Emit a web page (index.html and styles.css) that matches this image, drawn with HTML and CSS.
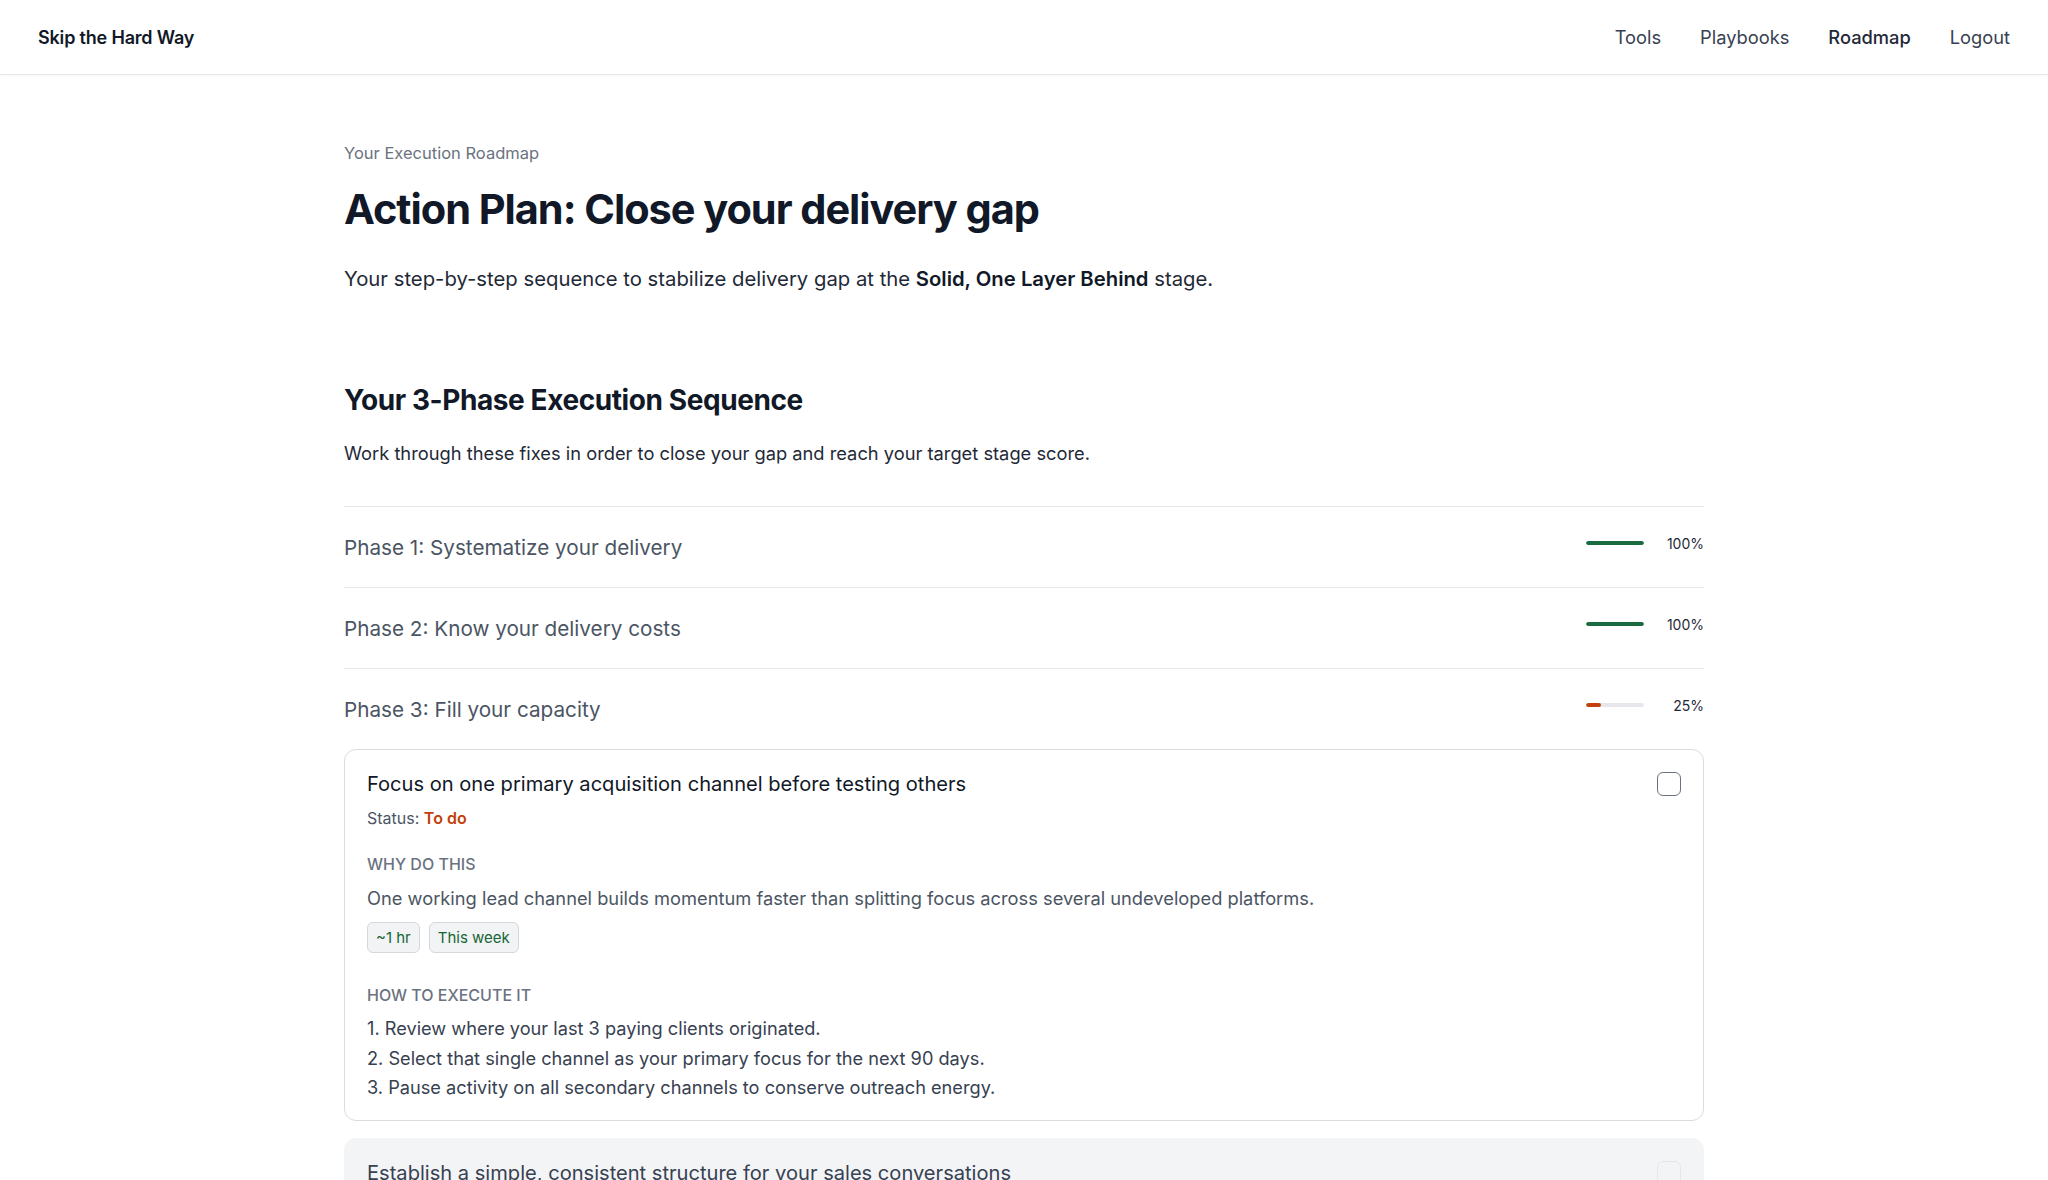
FILE: index.html
```html
<!DOCTYPE html>
<html lang="en">
<head>
<meta charset="utf-8">
<title>Action Plan – Skip the Hard Way</title>
<link rel="stylesheet" href="styles.css">
</head>
<body>
<header class="topbar">
  <a class="brand" href="#">Skip the Hard Way</a>
  <nav class="nav">
    <a href="#">Tools</a>
    <a href="#">Playbooks</a>
    <a href="#" class="active">Roadmap</a>
    <a href="#">Logout</a>
  </nav>
</header>

<main class="page">
  <p class="eyebrow">Your Execution Roadmap</p>
  <h1 class="title">Action Plan: Close your delivery gap</h1>
  <p class="lead">Your step-by-step sequence to stabilize delivery gap at the <strong>Solid, One Layer Behind</strong> stage.</p>

  <section class="sequence">
    <h2 class="section-title">Your 3-Phase Execution Sequence</h2>
    <p class="section-intro">Work through these fixes in order to close your gap and reach your target stage score.</p>

    <div class="phases">
      <div class="phase">
        <div class="phase-head">
          <span class="phase-name">Phase 1: Systematize your delivery</span>
          <div class="progress">
            <div class="track"><div class="fill done" style="width:100%"></div></div>
            <span class="pct">100%</span>
          </div>
        </div>
      </div>

      <div class="phase">
        <div class="phase-head">
          <span class="phase-name">Phase 2: Know your delivery costs</span>
          <div class="progress">
            <div class="track"><div class="fill done" style="width:100%"></div></div>
            <span class="pct">100%</span>
          </div>
        </div>
      </div>

      <div class="phase open">
        <div class="phase-head">
          <span class="phase-name">Phase 3: Fill your capacity</span>
          <div class="progress">
            <div class="track"><div class="fill todo" style="width:25%"></div></div>
            <span class="pct">25%</span>
          </div>
        </div>

        <div class="tasks">
          <article class="task">
            <div class="task-top">
              <div>
                <h3 class="task-title">Focus on one primary acquisition channel before testing others</h3>
                <p class="status">Status: <span class="status-todo">To do</span></p>
              </div>
              <span class="check"></span>
            </div>

            <h4 class="label">Why do this</h4>
            <p class="why">One working lead channel builds momentum faster than splitting focus across several undeveloped platforms.</p>
            <div class="tags">
              <span class="tag">~1 hr</span>
              <span class="tag">This week</span>
            </div>

            <h4 class="label how">How to execute it</h4>
            <ol class="steps">
              <li>1. Review where your last 3 paying clients originated.</li>
              <li>2. Select that single channel as your primary focus for the next 90 days.</li>
              <li>3. Pause activity on all secondary channels to conserve outreach energy.</li>
            </ol>
          </article>

          <article class="task locked">
            <div class="task-top">
              <div>
                <h3 class="task-title">Establish a simple, consistent structure for your sales conversations</h3>
              </div>
              <span class="check"></span>
            </div>
          </article>
        </div>
      </div>
    </div>
  </section>
</main>
</body>
</html>
```

FILE: styles.css
```css
* {
  box-sizing: border-box;
}

html, body {
  margin: 0;
  padding: 0;
  background: #ffffff;
}

body {
  font-family: Inter, "Noto Sans", "Liberation Sans", sans-serif;
  color: #111827;
  -webkit-font-smoothing: antialiased;
}

a {
  text-decoration: none;
  color: inherit;
}

/* top bar */
.topbar {
  height: 75px;
  display: flex;
  align-items: center;
  justify-content: space-between;
  padding: 0 38px;
  border-bottom: 1px solid #e5e7eb;
  box-shadow: 0 1px 3px rgba(0, 0, 0, 0.04);
}

.brand {
  font-size: 18px;
  font-weight: 600;
  color: #111827;
  letter-spacing: -0.01em;
}

.nav {
  display: flex;
  gap: 39px;
}

.nav a {
  font-size: 18.3px;
  color: #374151;
}

.nav a.active {
  color: #1f2937;
  font-weight: 500;
}

/* page */
.page {
  max-width: 1360px;
  margin: 0 auto;
  padding-top: 66px;
}

.eyebrow {
  margin: 0;
  font-size: 16.5px;
  line-height: 24px;
  color: #6b7280;
}

.title {
  margin: 20px 0 0;
  font-size: 41.5px;
  line-height: 48px;
  font-weight: 700;
  letter-spacing: -0.025em;
  color: #111827;
}

.lead {
  margin: 31px 0 0;
  font-size: 20.3px;
  line-height: 30px;
  color: #1f2937;
}

.lead strong {
  font-weight: 600;
  color: #111827;
}

.sequence {
  margin-top: 88px;
}

.section-title {
  margin: 0;
  font-size: 28px;
  line-height: 36px;
  font-weight: 700;
  letter-spacing: -0.015em;
  color: #111827;
}

.section-intro {
  margin: 21px 0 0;
  font-size: 18.3px;
  line-height: 28px;
  color: #1f2937;
}

/* phases */
.phases {
  margin-top: 39px;
}

.phase {
  border-top: 1px solid #e5e7eb;
}

.phase-head {
  height: 80px;
  display: flex;
  align-items: center;
  justify-content: space-between;
}

.phase-name {
  font-size: 20.7px;
  color: #4b5563;
}

.progress {
  display: flex;
  align-items: center;
  gap: 20px;
  margin-top: -8px;
}

.track {
  width: 58px;
  height: 4px;
  border-radius: 2px;
  background: #e5e7eb;
  overflow: hidden;
}

.fill {
  height: 100%;
  border-radius: 2px;
}

.fill.done {
  background: #1a6b40;
}

.fill.todo {
  background: #c2410c;
}

.pct {
  width: 40px;
  text-align: right;
  font-size: 14px;
  color: #1f2937;
}

/* tasks */
.tasks {
  display: flex;
  flex-direction: column;
  gap: 17px;
}

.task {
  border: 1px solid #d9dce1;
  border-radius: 12px;
  padding: 20px 22px 17px 22px;
  background: #ffffff;
}

.task-top {
  display: flex;
  justify-content: space-between;
  align-items: flex-start;
}

.task-title {
  margin: 0;
  font-size: 20.1px;
  line-height: 28px;
  font-weight: 400;
  color: #111827;
}

.check {
  flex: none;
  width: 24px;
  height: 24px;
  margin-top: 2px;
  border: 1.5px solid #6b7280;
  border-radius: 6px;
  background: #ffffff;
}

.status {
  margin: 8px 0 0;
  font-size: 16px;
  line-height: 24px;
  color: #4b5563;
}

.status-todo {
  color: #c2410c;
  font-weight: 600;
}

.label {
  margin: 23px 0 0;
  font-size: 16px;
  line-height: 22px;
  font-weight: 500;
  text-transform: uppercase;
  color: #6b7280;
}

.label.how {
  margin-top: 31px;
}

.why {
  margin: 9px 0 0;
  font-size: 18.3px;
  line-height: 28px;
  color: #4b5563;
}

.tags {
  display: flex;
  gap: 9px;
  margin-top: 10px;
}

.tag {
  font-size: 15px;
  line-height: 21px;
  padding: 4px 8px;
  border: 1px solid #d4d8dd;
  border-radius: 6px;
  background: #f1f3f4;
  color: #166534;
}

.steps {
  list-style: none;
  margin: 8px 0 0;
  padding: 0;
  font-size: 18.2px;
  line-height: 29.5px;
  color: #374151;
}

.task.locked {
  background: #f3f4f6;
  border-color: #f3f4f6;
}

.task.locked .task-title {
  color: #374151;
}

.task.locked .check {
  border-color: #e5e7eb;
  background: #f3f4f6;
}
```
